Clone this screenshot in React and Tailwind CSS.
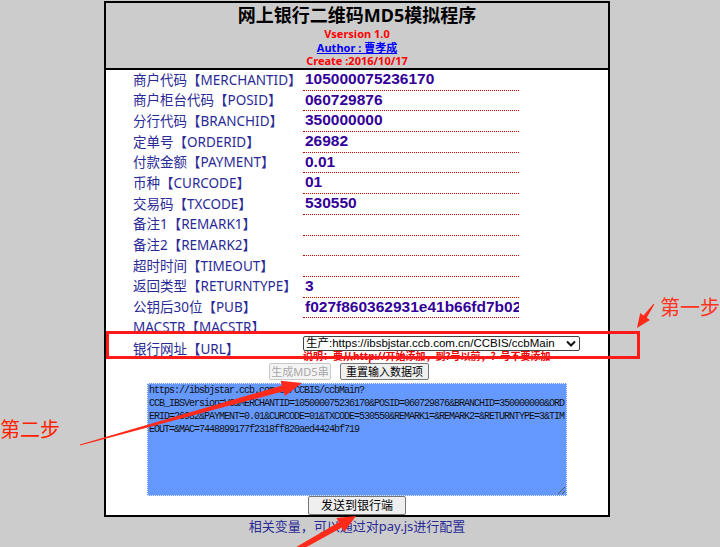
import React from 'react';

const rows = [
  ['商户代码【MERCHANTID】', '105000075236170'],
  ['商户柜台代码【POSID】', '060729876'],
  ['分行代码【BRANCHID】', '350000000'],
  ['定单号【ORDERID】', '26982'],
  ['付款金额【PAYMENT】', '0.01'],
  ['币种【CURCODE】', '01'],
  ['交易码【TXCODE】', '530550'],
  ['备注1【REMARK1】', ''],
  ['备注2【REMARK2】', ''],
  ['超时时间【TIMEOUT】', ''],
  ['返回类型【RETURNTYPE】', '3'],
  ['公钥后30位【PUB】', 'f027f860362931e41b66fd7b02'],
];

const macText = [
  'https://ibsbjstar.ccb.com.cn/CCBIS/ccbMain?',
  'CCB_IBSVersion=V6&MERCHANTID=105000075236170&POSID=060729876&BRANCHID=350000000&ORD',
  'ERID=26982&PAYMENT=0.01&CURCODE=01&TXCODE=530550&REMARK1=&REMARK2=&RETURNTYPE=3&TIM',
  'EOUT=&MAC=7448899177f2318ff820aed4424bf719',
].join('\n');

const Row = ({ label, value }) => (
  <div className="flex h-[20.7px]">
    <div className="w-[170px] flex items-center text-[13.5px] leading-none text-[#2a2a96] whitespace-nowrap">{label}</div>
    <div className="w-[216px] border-b border-dotted border-[#dd0000] pl-[2px] text-[15.5px] leading-[18px] font-bold text-[#330099] font-['Liberation_Sans',Arial,sans-serif] overflow-hidden whitespace-nowrap">
      {value}
    </div>
  </div>
);

export default function App() {
  return (
    <div className="relative w-[720px] h-[547px] overflow-hidden bg-[#cccccc] font-['Noto_Sans','Noto_Sans_CJK_SC',sans-serif]">
      <div className="ml-[104px] mt-px w-[506px] border-2 border-black bg-white">
        <div className="h-[67px] bg-[#cccccc] border-b-2 border-black flex flex-col items-center">
          <div className="text-[18px] leading-[24px] font-bold text-black">网上银行二维码MD5模拟程序</div>
          <div className="text-[11px] leading-[13.5px] font-bold text-[#ff0000]">Vsersion 1.0</div>
          <div className="text-[11px] leading-[13.5px] font-bold text-[#0000ff] underline">Author : 曹孝成</div>
          <div className="text-[11px] leading-[13.5px] font-bold text-[#ff0000]">Create :2016/10/17</div>
        </div>

        <div className="pl-[27px]">
          {rows.map(([l, v]) => (
            <Row key={l} label={l} value={v} />
          ))}
          <div className="flex h-[18px]">
            <div className="w-[170px] flex items-center text-[13.5px] leading-none text-[#2a2a96]">MACSTR【MACSTR】</div>
          </div>
          <div className="flex h-[26px]">
            <div className="w-[170px] flex items-center text-[13.5px] leading-none text-[#2a2a96]">银行网址【URL】</div>
            <div className="flex flex-col">
              <div className="h-[15px] w-[277px] border border-[#444] rounded-[2px] bg-white pl-[2px] pr-[3px] flex items-center justify-between text-[11.5px] leading-none text-black font-['Liberation_Sans','Noto_Sans_CJK_SC',sans-serif]">
                <span>生产:https://ibsbjstar.ccb.com.cn/CCBIS/ccbMain</span>
                <svg width="10" height="7" viewBox="0 0 10 7">
                  <path d="M1 1.5 L5 5.5 L9 1.5" fill="none" stroke="#111" strokeWidth="2" />
                </svg>
              </div>
              <div className="text-[10px] leading-[11px] font-bold text-[#ee0000] whitespace-nowrap">
                说明：要从http://开始添加，到?号以前，？号不要添加
              </div>
            </div>
          </div>
        </div>

        <div className="mt-px flex gap-[9px] pl-[163px]">
          <button disabled className="h-[17px] w-[62px] flex items-center justify-center text-[11px] leading-none text-[#a8a8a8] border border-[#c8c8c8] bg-[#f4f4f4] rounded-[2px]">
            生成MD5串
          </button>
          <button className="h-[17px] w-[89px] flex items-center justify-center text-[11px] leading-none text-black border border-[#767676] bg-[#efefef] rounded-[2px]">
            重置输入数据项
          </button>
        </div>

        <div className="relative mt-[3px] mx-auto w-[420px] h-[113px] bg-[#6699ff] border border-dotted border-[#e6ecff] overflow-hidden">
          <div className="pl-px whitespace-pre text-[10px] leading-[13px] tracking-[-1px] text-[#111] font-['Liberation_Mono',monospace]">
            {macText}
          </div>
          <svg className="absolute right-0 bottom-0" width="10" height="10" viewBox="0 0 10 10">
            <path d="M9 2 L2 9 M9 6 L6 9" stroke="#555" strokeWidth="1" />
          </svg>
        </div>

        <button className="mx-auto flex items-center justify-center w-[98px] h-[19px] text-[12px] leading-none text-black border border-[#767676] bg-[#efefef] rounded-[2px]">
          发送到银行端
        </button>
      </div>

      <div className="ml-[104px] w-[506px] text-center text-[13px] leading-[18px] text-[#2a2a96]">
        相关变量，可以通过对pay.js进行配置
      </div>

      <div className="absolute left-[660px] top-[295px] text-[20px] leading-[26px] text-[#ff3322] whitespace-nowrap">第一步</div>
      <div className="absolute left-0 top-[417px] text-[20px] leading-[26px] text-[#ff2200] whitespace-nowrap">第二步</div>

      <svg className="absolute left-0 top-0 pointer-events-none" width="720" height="547" viewBox="0 0 720 547">
        <rect x="107.5" y="332.5" width="531" height="25" fill="none" stroke="#ff1a1a" strokeWidth="3" />
        <polygon
          fill="#ff2a1a"
          points="654.41,304.29 646.72,317.74 649.99,320.05 637,328 640.19,313.11 643.46,315.42 653.59,303.71"
        />
        <polygon
          fill="#ff2a1a"
          points="80.13,445.48 283.55,391.27 284.89,396.08 302,383 280.59,380.68 281.93,385.49 79.87,444.52"
        />
        <polygon
          fill="#ff2a1a"
          points="297.23,552.18 341.82,527.48 344.28,531.83 356,516 336.4,517.91 338.86,522.26 294.77,547.83"
        />
      </svg>
    </div>
  );
}
